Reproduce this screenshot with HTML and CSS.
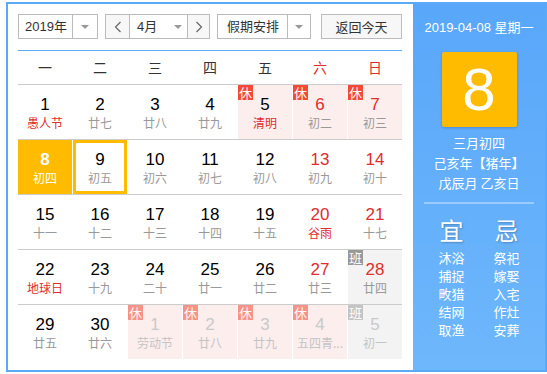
FILE: index.html
```html
<!DOCTYPE html>
<html lang="zh">
<head>
<meta charset="utf-8">
<link rel="stylesheet" href="styles.css">
</head>
<body>
<div class="cal">
  <div class="main">
    <div class="toolbar">
      <div class="ctrl year">
        <span class="ctrl-text">2019年</span>
        <span class="ctrl-arrow"><i class="tri"></i></span>
      </div>
      <div class="ctrl month">
        <span class="nav"><svg width="8" height="12" viewBox="0 0 8 12"><polyline points="6.5,1 1.5,6 6.5,11" fill="none" stroke="#666" stroke-width="1.2"/></svg></span>
        <span class="ctrl-text m-text">4月</span>
        <span class="m-arrow"><i class="tri"></i></span>
        <span class="nav nav-r"><svg width="8" height="12" viewBox="0 0 8 12"><polyline points="1.5,1 6.5,6 1.5,11" fill="none" stroke="#666" stroke-width="1.2"/></svg></span>
      </div>
      <div class="ctrl holiday">
        <span class="ctrl-text">假期安排</span>
        <span class="ctrl-arrow"><i class="tri"></i></span>
      </div>
      <div class="ctrl today-btn">返回今天</div>
    </div>
    <div class="grid">
      <div class="week">
        <span>一</span><span>二</span><span>三</span><span>四</span><span>五</span><span class="red">六</span><span class="red">日</span>
      </div>
      <div class="row">
        <div class="cell"><b>1</b><em class="fest">愚人节</em></div>
        <div class="cell"><b>2</b><em>廿七</em></div>
        <div class="cell"><b>3</b><em>廿八</em></div>
        <div class="cell"><b>4</b><em>廿九</em></div>
        <div class="cell rest"><i class="badge">休</i><b>5</b><em class="fest">清明</em></div>
        <div class="cell rest wk"><i class="badge">休</i><b>6</b><em>初二</em></div>
        <div class="cell rest wk"><i class="badge">休</i><b>7</b><em>初三</em></div>
      </div>
      <div class="row">
        <div class="cell today"><b>8</b><em>初四</em></div>
        <div class="cell hover"><b>9</b><em>初五</em></div>
        <div class="cell"><b>10</b><em>初六</em></div>
        <div class="cell"><b>11</b><em>初七</em></div>
        <div class="cell"><b>12</b><em>初八</em></div>
        <div class="cell wk"><b>13</b><em>初九</em></div>
        <div class="cell wk"><b>14</b><em>初十</em></div>
      </div>
      <div class="row">
        <div class="cell"><b>15</b><em>十一</em></div>
        <div class="cell"><b>16</b><em>十二</em></div>
        <div class="cell"><b>17</b><em>十三</em></div>
        <div class="cell"><b>18</b><em>十四</em></div>
        <div class="cell"><b>19</b><em>十五</em></div>
        <div class="cell wk"><b>20</b><em class="fest">谷雨</em></div>
        <div class="cell wk"><b>21</b><em>十七</em></div>
      </div>
      <div class="row">
        <div class="cell"><b>22</b><em class="fest">地球日</em></div>
        <div class="cell"><b>23</b><em>十九</em></div>
        <div class="cell"><b>24</b><em>二十</em></div>
        <div class="cell"><b>25</b><em>廿一</em></div>
        <div class="cell"><b>26</b><em>廿二</em></div>
        <div class="cell wk"><b>27</b><em>廿三</em></div>
        <div class="cell work wk"><i class="badge">班</i><b>28</b><em>廿四</em></div>
      </div>
      <div class="row">
        <div class="cell"><b>29</b><em>廿五</em></div>
        <div class="cell"><b>30</b><em>廿六</em></div>
        <div class="cell rest next"><i class="badge">休</i><b>1</b><em>劳动节</em></div>
        <div class="cell rest next"><i class="badge">休</i><b>2</b><em>廿八</em></div>
        <div class="cell rest next"><i class="badge">休</i><b>3</b><em>廿九</em></div>
        <div class="cell rest next"><i class="badge">休</i><b>4</b><em>五四青...</em></div>
        <div class="cell work next"><i class="badge">班</i><b>5</b><em>初一</em></div>
      </div>
    </div>
  </div>
  <div class="side">
    <div class="side-date">2019-04-08 星期一</div>
    <div class="big-day">8</div>
    <div class="lunar">
      <div>三月初四</div>
      <div>己亥年【猪年】</div>
      <div>戊辰月 乙亥日</div>
    </div>
    <div class="divider"></div>
    <div class="yiji">
      <div class="yj-col">
        <div class="yj-head">宜</div>
        <div>沐浴</div><div>捕捉</div><div>畋猎</div><div>结网</div><div>取渔</div>
      </div>
      <div class="yj-col">
        <div class="yj-head">忌</div>
        <div>祭祀</div><div>嫁娶</div><div>入宅</div><div>作灶</div><div>安葬</div>
      </div>
    </div>
  </div>
</div>
</body>
</html>
```

FILE: styles.css
```css
* { box-sizing: border-box; }
html, body { margin: 0; padding: 0; background: #fff; }
body {
  font-family: "Liberation Sans", Arial, "Noto Sans CJK SC", sans-serif;
  color: #333;
}
.cal {
  margin: 2px 0 0 6px;
  width: 541px;
  height: 370px;
  border: 2px solid #5ba9f9;
  display: flex;
}
.main {
  width: 405px;
  padding: 10px 11px 0 10px;
  background: #fff;
}
.toolbar {
  display: flex;
  height: 25px;
}
.ctrl {
  height: 25px;
  border: 1px solid #bbb;
  display: flex;
  align-items: center;
  font-size: 13px;
  color: #333;
  background: #fff;
}
.ctrl-text {
  flex: 1;
  text-align: center;
  line-height: 23px;
}
.ctrl-arrow {
  width: 25px;
  height: 23px;
  border-left: 1px solid #bbb;
  display: flex;
  align-items: center;
  justify-content: center;
}
.tri {
  width: 0; height: 0;
  border-left: 4px solid transparent;
  border-right: 4px solid transparent;
  border-top: 4px solid #999;
}
.year { width: 80px; }
.year .ctrl-text { padding-left: 1px; }
.month { width: 105px; margin-left: 7px; }
.nav {
  width: 24px;
  height: 23px;
  display: flex;
  align-items: center;
  justify-content: center;
  background: #f7f7f7;
  border-right: 1px solid #bbb;
}
.nav-r { border-right: 0; border-left: 1px solid #bbb; width: 22px; }
.m-text { flex: none; width: 36px; text-align: left; padding-left: 7px; }
.m-arrow {
  width: 21px;
  display: flex;
  align-items: center;
  justify-content: center;
  padding-left: 2px;
}
.holiday { width: 94px; margin-left: 7px; }
.holiday .ctrl-text { padding-left: 1px; }
.holiday .ctrl-arrow { width: 23px; }
.today-btn {
  width: 81px;
  margin-left: 10px;
  justify-content: center;
  background: #f7f7f7;
  font-size: 13px;
}
.grid {
  margin-top: 11px;
  border-top: 1px solid #5ba9f9;
  width: 384px;
}
.week {
  display: flex;
  gap: 1px;
  height: 34px;
  border-bottom: 1px solid #ccc;
}
.week span {
  width: 54px;
  text-align: center;
  line-height: 33px;
  font-size: 14px;
  color: #333;
  font-family: "Noto Sans CJK SC", sans-serif;
}
.red { color: #e02d2d !important; }
.row {
  display: flex;
  gap: 1px;
}
.row + .row { border-top: 1px solid #ccc; }
.cell {
  position: relative;
  width: 54px;
  height: 54px;
  text-align: center;
  padding-top: 10px;
}
.cell b {
  display: block;
  font-weight: normal;
  font-size: 17px;
  line-height: 20px;
  color: #000;
}
.cell em {
  display: block;
  font-style: normal;
  font-size: 12px;
  line-height: 16px;
  margin-top: 0;
  color: #999;
  font-family: "Noto Sans CJK SC", sans-serif;
  white-space: nowrap;
}
.cell em.fest { color: #e02d2d; }
.cell.wk b { color: #e02d2d; }
.rest { background: #fdeeee; }
.work { background: #f3f3f3; }
.badge {
  position: absolute;
  left: 0;
  top: 0;
  width: 15px;
  height: 15px;
  font-style: normal;
  font-size: 13px;
  line-height: 15px;
  color: #fff;
  background: #f24a36;
  text-align: center;
  font-family: "Noto Sans CJK SC", sans-serif;
}
.work .badge { background: #999; }
.next b, .next.wk b { color: #c9c9c9; }
.next em { color: #c4c4c4; }
.next .badge { opacity: 0.55; }
.work.next .badge { background: #c4c4c4; opacity: 1; }
.today { background: #ffbb00; }
.today b { color: #fff; font-weight: bold; }
.today em { color: #fff; }
.hover { border: 3px solid #ffbb00; padding-top: 7px; }
.side {
  width: 132px;
  background: linear-gradient(#59a7fa, #6eb7fc);
  display: flex;
  flex-direction: column;
  align-items: center;
  color: #fff;
  font-family: "Liberation Sans", Arial, "Noto Sans CJK SC", sans-serif;
  padding-top: 16px;
}
.side-date { font-size: 13px; line-height: 16px; white-space: nowrap; }
.big-day {
  margin-top: 16px;
  width: 75px;
  height: 75px;
  background: #ffbb00;
  border-radius: 2px;
  box-shadow: 0 1px 3px rgba(0, 0, 0, 0.2);
  font-size: 60px;
  line-height: 75px;
  text-align: center;
  color: #fff;
}
.lunar {
  margin-top: 6px;
  font-size: 13px;
  line-height: 20px;
  text-align: center;
  font-family: "Noto Sans CJK SC", sans-serif;
}
.divider {
  margin-top: 9px;
  width: 110px;
  height: 2px;
  background: rgba(255, 255, 255, 0.35);
}
.yiji {
  margin-top: 11px;
  display: grid;
  grid-template-columns: 55px 55px;
  font-family: "Noto Sans CJK SC", sans-serif;
  font-size: 13px;
  line-height: 18px;
  text-align: center;
}
.yj-head {
  font-size: 24px;
  line-height: 30px;
  margin-bottom: 4px;
  text-shadow: 1px 1px 2px rgba(0, 0, 0, 0.25);
}
```
